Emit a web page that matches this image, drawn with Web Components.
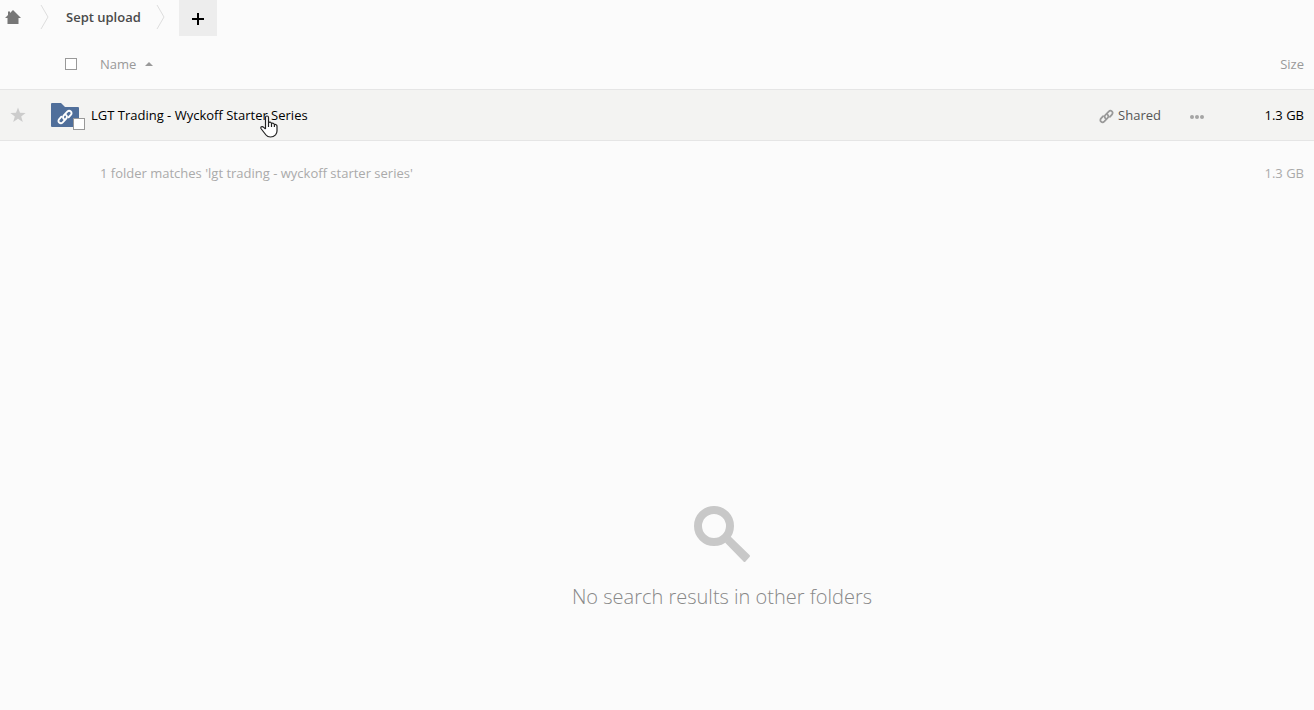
<!DOCTYPE html>
<html lang="en">
<head>
<meta charset="utf-8">
<title>Files</title>
<style>
body { margin: 0; min-height: 100vh; background: #fbfbfb; color: #000; font: 13px/20px "Open Sans", "Noto Sans", sans-serif; }
</style>
</head>
<body>
<files-app></files-app>
<script>
const ICONS = {
  home: '<svg viewBox="0 0 16 16" width="16" height="16"><path fill="#777" d="M8 1 16 9h-2.500v6h-11V9H0l3-3V2.500h2V4z"/></svg>',
  crumb: '<svg viewBox="0 0 9 24" width="9" height="24"><path fill="none" stroke="#ddd" d="M1 0 8 12 1 24"/></svg>',
  plus: '<svg viewBox="0 0 12 12" width="12" height="12"><path fill="#000" d="M5 0h2v5h5v2H7v5H5V7H0V5h5z"/></svg>',
  star: '<svg viewBox="0 0 16 16" width="16" height="16"><path fill="#ccc" d="m8 .5 2 5.200 5.600.2-4.400 3.500 1.600 5.600L8 11.800 3.200 15l1.600-5.600L.4 5.900 6 5.700z"/></svg>',
  link: '<svg viewBox="0 0 16 16" width="100%" height="100%"><g fill="none" stroke="currentColor" stroke-width="1.900" stroke-linecap="round"><path d="M7.200 10.200C5.700 9.200 5.700 7.600 6.800 6.400L10.300 2.700c1-1 2.500-1.100 3.500-.2s1 2.300 0 3.400L11.600 8.300"/><path d="M8.800 5.800c1.500 1 1.500 2.600.4 3.800L5.700 13.300c-1 1-2.500 1.100-3.500.2s-1-2.300 0-3.400L4.400 7.700"/></g></svg>',
  folder: '<svg viewBox="0 0 28 24" width="28" height="24"><path fill="#506f9b" d="M1 0h9l4 4h13q1 0 1 1v18q0 1-1 1H1q-1 0-1-1V1q0-1 1-1z"/></svg>',
  more: '<svg viewBox="0 0 14 4" width="14" height="4"><g fill="#a5a5a5"><circle cx="2" cy="2" r="2"/><circle cx="7" cy="2" r="2"/><circle cx="12" cy="2" r="2"/></g></svg>',
  sort: '<svg viewBox="0 0 8 4" width="8" height="4"><path fill="#999" d="M0 4 4 0l4 4z"/></svg>',
  search: '<svg viewBox="0 0 56 56" width="56" height="56"><circle cx="20" cy="20" r="16" fill="none" stroke="#c8c8c8" stroke-width="8"/><path fill="#c8c8c8" d="m36.500 30.500 19 18.500q1 1 0 2l-4 4.500q-1 1-2 0L31 36.500z"/></svg>',
  hand: '<svg viewBox="0 0 18 23" width="18" height="23"><path fill="#fff" stroke="#222" stroke-width="1.200" stroke-linejoin="round" d="M5.500 14V2.500Q5.500 1 7 1t1.500 1.500V8q.7-1 1.700-.8t1.300 1.500q.7-.9 1.700-.5t1.200 1.500q.7-.5 1.700 0t.9 1.500V16q0 2-1.500 3.800Q13.500 22 10.500 22T6 20L1.300 14q-1-1.500.1-2.200t2.300.6L5.500 14M8.500 8v4M11.500 9v3M14.400 10v2"/></svg>'
};

function define(name, markup) {
  const template = document.createElement('template');
  template.innerHTML = markup;
  customElements.define(name, class extends HTMLElement {
    constructor() {
      super();
      this.attachShadow({ mode: 'open' }).append(template.content.cloneNode(true));
    }
  });
}

customElements.define('ui-icon', class extends HTMLElement {
  connectedCallback() {
    if (this.shadowRoot) return;
    this.attachShadow({ mode: 'open' }).innerHTML =
      '<style>:host{display:inline-flex;flex:none}svg{display:block}</style>' + ICONS[this.getAttribute('name')];
    this.setAttribute('aria-hidden', 'true');
  }
});

define('check-box', `
<style>
:host { display: inline-flex; flex: none; }
input { appearance: none; box-sizing: border-box; width: 12px; height: 12px; margin: 0; border: 1px solid #999; background: #fff; }
</style>
<input type="checkbox" aria-label="Select">`);

define('crumb-item', `
<style>
:host { display: flex; align-items: center; }
a { display: flex; align-items: center; color: #4a4a4a; font-weight: 600; text-decoration: none; }
</style>
<a href="#"><slot></slot></a>`);

define('crumb-bar', `
<style>
nav { display: flex; align-items: center; height: 36px; padding-left: 5px; }
.first { margin-left: 19px; }
crumb-item.name { margin: 0 15px 0 17px; }
.sep { padding-bottom: 2px; }
crumb-item { padding-bottom: 2px; }
button { display: flex; align-items: center; justify-content: center; width: 38px; height: 36px; margin-left: 14px; padding: 2px 0 0; border: 0; background: #ededed; }
</style>
<nav aria-label="Folders">
<crumb-item><ui-icon name="home"></ui-icon></crumb-item>
<ui-icon class="sep first" name="crumb"></ui-icon>
<crumb-item class="name">Sept upload</crumb-item>
<ui-icon class="sep" name="crumb"></ui-icon>
<button aria-label="New"><ui-icon name="plus"></ui-icon></button>
</nav>`);

define('folder-icon', `
<style>
:host { position: relative; display: block; flex: none; width: 28px; height: 24px; }
.link { position: absolute; left: 6px; top: 6px; width: 16px; height: 16px; color: #fff; }
check-box { position: absolute; left: 22px; top: 15px; }
</style>
<ui-icon name="folder"></ui-icon>
<ui-icon class="link" name="link"></ui-icon>
<check-box></check-box>`);

define('file-list', `
<style>
table { width: 100%; border-collapse: collapse; table-layout: fixed; }
th, td { padding: 0; font-weight: 400; text-align: left; }
.star { width: 51px; }
.size { width: 100px; }
.size, td:last-child, th:last-child { padding-right: 10px; text-align: right; }
thead th { height: 50px; padding-top: 3px; color: #999; }
.head { display: flex; align-items: center; gap: 23px; padding-left: 14px; }
.sort { display: flex; align-items: center; gap: 9px; padding: 0; border: 0; background: none; color: inherit; font: inherit; }
tbody tr { height: 51px; border: solid #e5e5e5; border-width: 1px 0; background: #f3f3f2; }
button { border: 0; padding: 0; background: none; font: inherit; }
.fav { display: flex; margin-left: 10px; }
.row { display: flex; align-items: center; }
.file { position: relative; margin-left: 12px; color: #000; text-decoration: none; }
.pointer { position: absolute; left: 169px; top: 10px; }
.share { display: flex; align-items: center; gap: 4px; margin-left: auto; color: #555; }
.share ui-icon { width: 15px; height: 15px; color: #999; padding-top: 2px; }
.more { display: flex; margin: 3px 0 0 29px; }
tfoot td { height: 63px; color: #aaa; }
.summary { padding-left: 49px; }
</style>
<table>
<thead><tr><th class="star"></th><th><div class="head"><check-box></check-box><button class="sort">Name<ui-icon name="sort"></ui-icon></button></div></th><th class="size">Size</th></tr></thead>
<tbody><tr>
<td><button class="fav" aria-label="Favorite"><ui-icon name="star"></ui-icon></button></td>
<td><div class="row"><folder-icon></folder-icon><a class="file" href="#">LGT Trading - Wyckoff Starter Series<ui-icon class="pointer" name="hand"></ui-icon></a><button class="share"><ui-icon name="link"></ui-icon>Shared</button><button class="more" aria-label="Actions"><ui-icon name="more"></ui-icon></button></div></td>
<td>1.3 GB</td>
</tr></tbody>
<tfoot><tr><td></td><td class="summary">1 folder matches 'lgt trading - wyckoff starter series'</td><td>1.3 GB</td></tr></tfoot>
</table>`);

define('empty-results', `
<style>
:host { display: flex; flex-direction: column; align-items: center; gap: 21px; padding: 0 0 99px 130px; }
p { margin: 0; color: #888; font-size: 20px; font-weight: 300; line-height: 28px; }
</style>
<ui-icon name="search"></ui-icon>
<p><slot></slot></p>`);

define('files-app', `
<style>
:host { display: flex; flex-direction: column; min-height: 100vh; }
main { display: flex; flex: 1; flex-direction: column; justify-content: space-between; }
</style>
<crumb-bar></crumb-bar>
<main>
<file-list></file-list>
<empty-results>No search results in other folders</empty-results>
</main>`);
</script>
</body>
</html>
